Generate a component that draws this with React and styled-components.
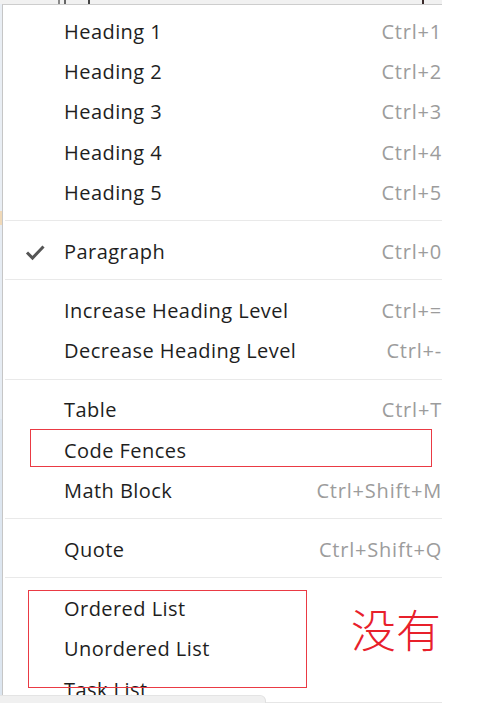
import React from "react";
import styled, { createGlobalStyle } from "styled-components";

const Global = createGlobalStyle`
  html, body { margin: 0; padding: 0; background: #ffffff; }
  body { font-family: "Open Sans", "Noto Sans", sans-serif; }
`;

const Root = styled.div`
  position: relative;
  width: 490px;
  height: 703px;
  display: flex;
  overflow: hidden;
  background: #ffffff;
`;

const Shot = styled.div`
  width: 442px;
  height: 703px;
  display: flex;
  flex-direction: column;
`;

const TopStrip = styled.div`
  height: 4px;
  background: #f1f1f1;
  position: relative;
`;

const Mark = styled.span`
  position: absolute;
  top: 0;
  width: 2px;
  height: 4px;
  background: ${(p) => p.$c || "#555"};
`;

const Middle = styled.div`
  flex: 1;
  display: flex;
  min-height: 0;
`;

const LeftStrip = styled.div`
  width: 2px;
  background: linear-gradient(#e9eef4 0 30%, #f0d9b8 30% 32%, #e6ecf3 32% 60%, #dde6f0 60% 100%);
`;

const Menu = styled.div`
  flex: 1;
  min-width: 0;
  overflow: hidden;
  border-left: 1px solid #c6c6c6;
  border-top: 1px solid #cdcdcd;
  padding-top: 6px;
  background: #ffffff;
`;

const Row = styled.div`
  height: 40.4px;
  display: grid;
  grid-template-columns: 61px 1fr auto;
  align-items: center;
  white-space: nowrap;
`;

const CheckCell = styled.div`
  display: flex;
  justify-content: center;
  align-items: center;
  padding-left: 2px;
`;

const Label = styled.span`
  font-size: 20px;
  letter-spacing: 0.45px;
  color: #1e1e1e;
`;

const Shortcut = styled.span`
  font-size: 20px;
  letter-spacing: 0.8px;
  color: #9c9c9c;
  text-align: right;
`;

const Separator = styled.div`
  padding: 7.5px 0 10px 2px;
  &::after {
    content: "";
    display: block;
    height: 1px;
    background: #e9e9e9;
  }
`;

const BottomStrip = styled.div`
  height: 8px;
  display: flex;
  align-items: stretch;
`;

const BottomTab = styled.div`
  width: 265px;
  background: #f0f0f0;
  border-top-right-radius: 6px;
  border-top: 1px solid #e4e4e4;
  border-right: 1px solid #e0e0e0;
`;

const BottomLine = styled.div`
  flex: 1;
  border-bottom: 1px solid #e6e6e6;
`;

const RedBox = styled.div`
  position: absolute;
  border: 1.5px solid #ea3a44;
  box-sizing: border-box;
`;

const Note = styled.div`
  position: absolute;
  left: 351px;
  top: 599px;
  font-family: "Noto Sans CJK SC", sans-serif;
  font-weight: 300;
  font-size: 45px;
  line-height: 60px;
  color: #e8202b;
`;

const Check = () => (
  <svg width="22" height="18" viewBox="0 0 22 18">
    <path d="M3 9.5 L8.5 15 L19.5 3.5" fill="none" stroke="#555" strokeWidth="3" strokeLinejoin="miter" />
  </svg>
);

const groups = [
  [
    ["Heading 1", "Ctrl+1"],
    ["Heading 2", "Ctrl+2"],
    ["Heading 3", "Ctrl+3"],
    ["Heading 4", "Ctrl+4"],
    ["Heading 5", "Ctrl+5"],
  ],
  [["Paragraph", "Ctrl+0", true]],
  [
    ["Increase Heading Level", "Ctrl+="],
    ["Decrease Heading Level", "Ctrl+-"],
  ],
  [
    ["Table", "Ctrl+T"],
    ["Code Fences", ""],
    ["Math Block", "Ctrl+Shift+M"],
  ],
  [["Quote", "Ctrl+Shift+Q"]],
  [
    ["Ordered List", ""],
    ["Unordered List", ""],
    ["Task List", ""],
  ],
];

export default function App() {
  return (
    <>
      <Global />
      <Root>
        <Shot>
          <TopStrip>
            <Mark style={{ left: 58 }} $c="#8a8a8a" />
            <Mark style={{ left: 64 }} $c="#666" />
            <Mark style={{ left: 88 }} $c="#444" />
            <Mark style={{ left: 422 }} $c="#3a2a2a" />
          </TopStrip>
          <Middle>
            <LeftStrip />
            <Menu>
              {groups.map((g, gi) => (
                <React.Fragment key={gi}>
                  {gi > 0 && <Separator />}
                  {g.map(([label, sc, checked]) => (
                    <Row key={label}>
                      <CheckCell>{checked ? <Check /> : null}</CheckCell>
                      <Label>{label}</Label>
                      <Shortcut>{sc}</Shortcut>
                    </Row>
                  ))}
                </React.Fragment>
              ))}
            </Menu>
          </Middle>
          <BottomStrip>
            <BottomTab />
            <BottomLine />
          </BottomStrip>
        </Shot>
        <RedBox style={{ left: 30, top: 429, width: 402, height: 38 }} />
        <RedBox style={{ left: 28, top: 590, width: 279, height: 98 }} />
        <Note>没有</Note>
      </Root>
    </>
  );
}
